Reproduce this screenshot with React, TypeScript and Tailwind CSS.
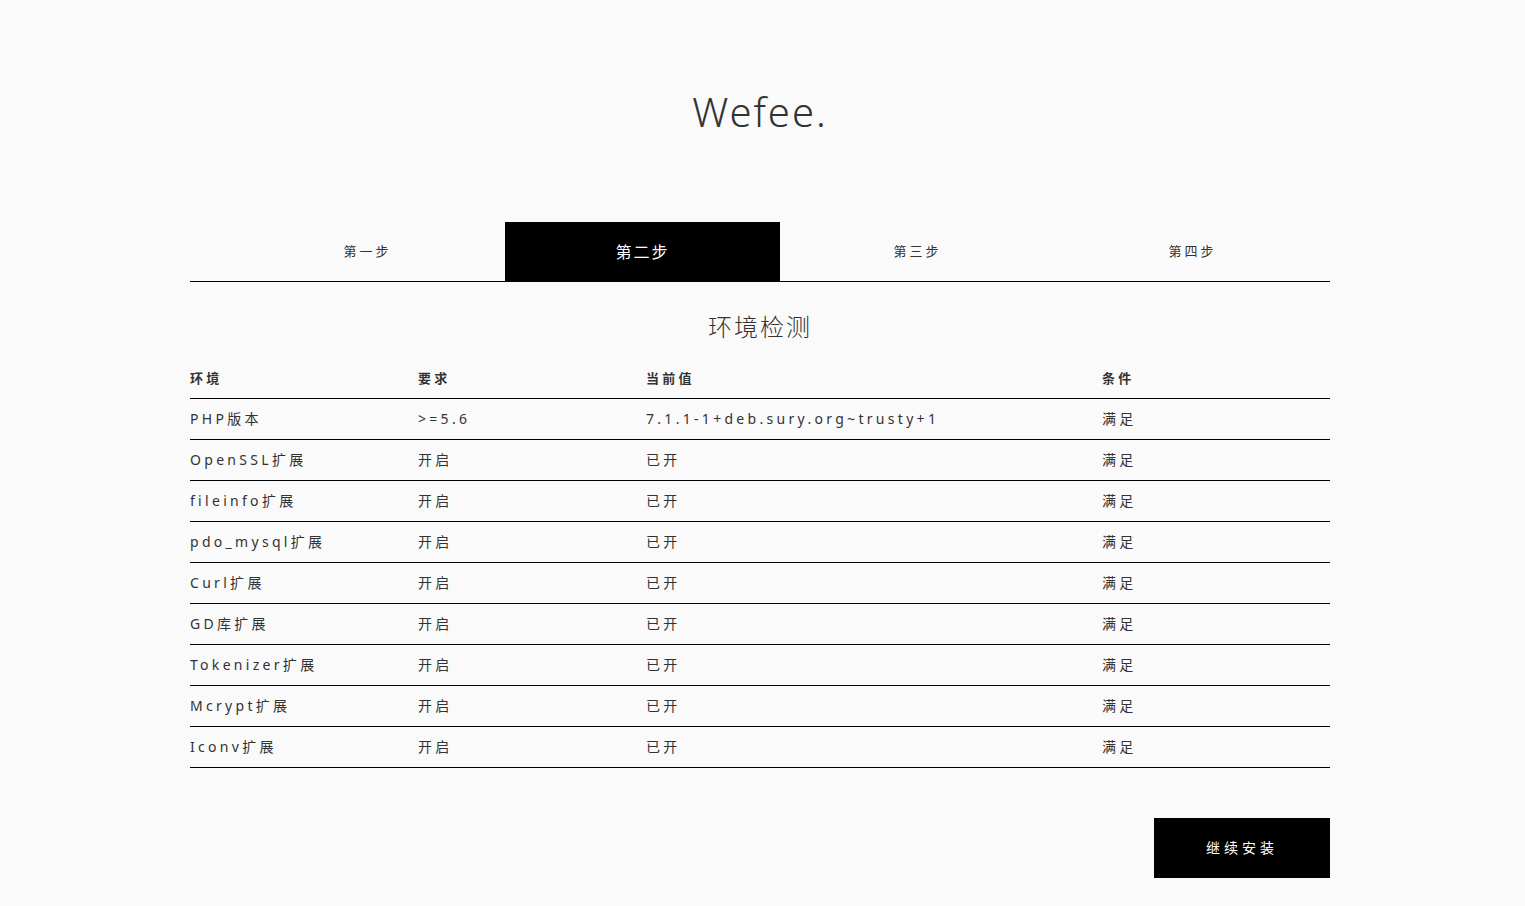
import React from "react";

const rows = [
  { name: "PHP版本", need: ">=5.6", now: "7.1.1-1+deb.sury.org~trusty+1", ok: "满足" },
  { name: "OpenSSL扩展", need: "开启", now: "已开", ok: "满足" },
  { name: "fileinfo扩展", need: "开启", now: "已开", ok: "满足" },
  { name: "pdo_mysql扩展", need: "开启", now: "已开", ok: "满足" },
  { name: "Curl扩展", need: "开启", now: "已开", ok: "满足" },
  { name: "GD库扩展", need: "开启", now: "已开", ok: "满足" },
  { name: "Tokenizer扩展", need: "开启", now: "已开", ok: "满足" },
  { name: "Mcrypt扩展", need: "开启", now: "已开", ok: "满足" },
  { name: "Iconv扩展", need: "开启", now: "已开", ok: "满足" },
];

const steps = ["第一步", "第二步", "第三步", "第四步"];

export default function App() {
  return (
    <div
      className="min-h-screen bg-[#fafafa] text-[#333]"
      style={{ fontFamily: '"Noto Sans", "Noto Sans CJK SC", sans-serif' }}
    >
      <div className="w-[1140px] ml-[190px]">
        {/* logo */}
        <div className="pt-[84px] h-[222px] text-center">
          <h1 className="text-[40px] leading-[56px] font-light tracking-[2px] text-[#333]">Wefee.</h1>
        </div>

        {/* 步骤 */}
        <ul className="flex pl-10 border-b border-black">
          {steps.map((s, i) => (
            <li
              key={s}
              className={
                i === 1
                  ? "w-[275px] h-[59px] flex items-center justify-center bg-black text-white text-base tracking-[2px]"
                  : "w-[275px] h-[59px] flex items-center justify-center text-[13px] tracking-[3px] text-[#333]"
              }
            >
              {s}
            </li>
          ))}
        </ul>

        <h2 className="text-center text-2xl font-light tracking-[2px] mt-[29px] mb-[26px] leading-[32px]">环境检测</h2>

        {/* 表格 */}
        <table className="w-full text-sm tracking-[3.3px] border-collapse">
          <thead>
            <tr className="border-b border-black h-[29px]">
              <th className="w-1/5 text-left text-[13px] font-bold align-top leading-[18px]">环境</th>
              <th className="w-1/5 text-left text-[13px] font-bold align-top leading-[18px]">要求</th>
              <th className="w-2/5 text-left text-[13px] font-bold align-top leading-[18px]">当前值</th>
              <th className="w-1/5 text-left text-[13px] font-bold align-top leading-[18px]">条件</th>
            </tr>
          </thead>
          <tbody>
            {rows.map((r) => (
              <tr key={r.name} className="border-b border-black h-[41px]">
                <td>{r.name}</td>
                <td>{r.need}</td>
                <td>{r.now}</td>
                <td>{r.ok}</td>
              </tr>
            ))}
          </tbody>
        </table>

        <div className="flex justify-end mt-[50px]">
          <button className="w-[176px] h-[60px] bg-black text-white text-sm tracking-[4px]">继续安装</button>
        </div>
      </div>
    </div>
  );
}
